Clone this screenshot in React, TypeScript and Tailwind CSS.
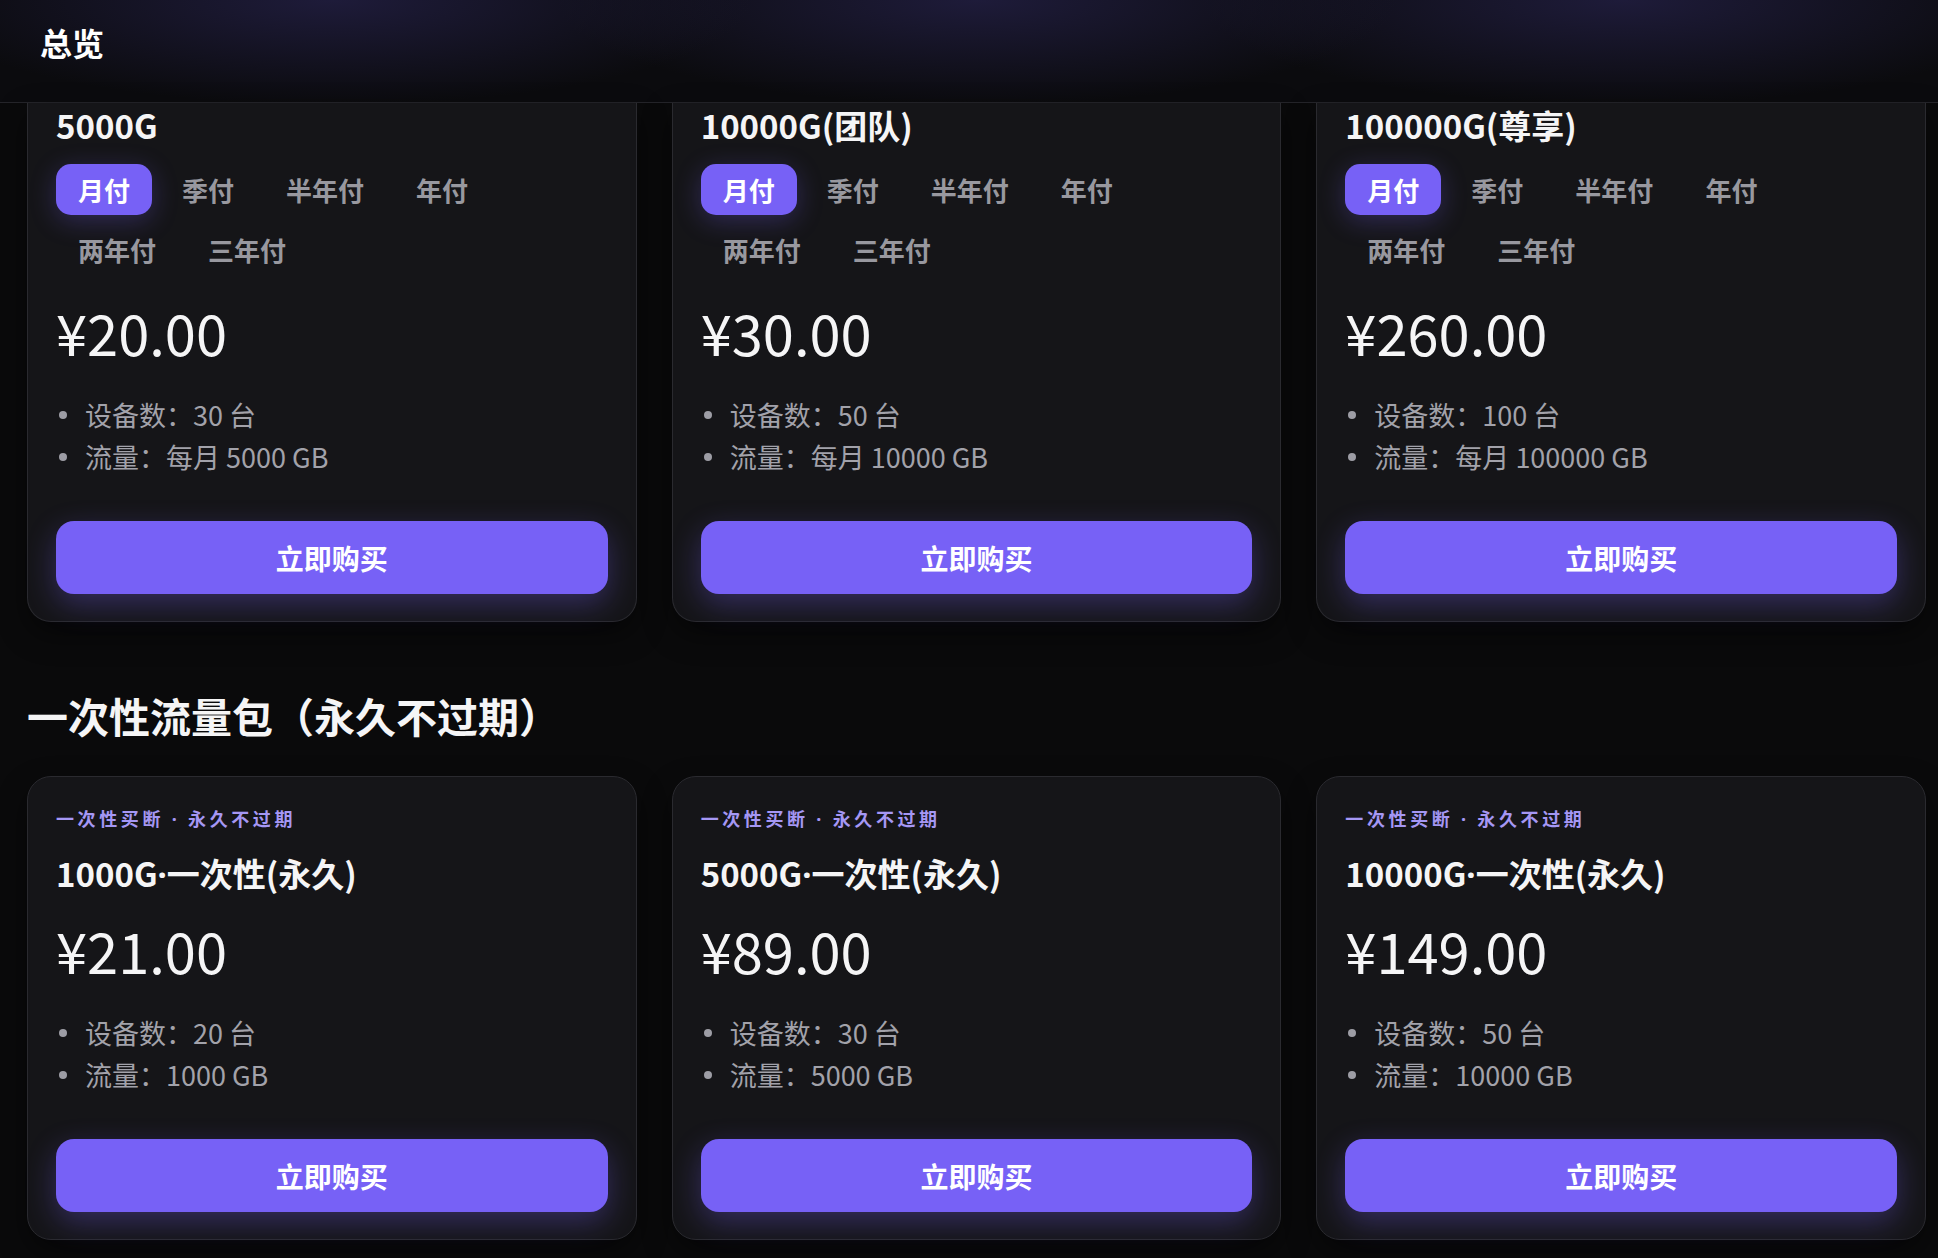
import React from 'react';

interface Plan {
  title: string;
  price: string;
  devices: string;
  traffic: string;
}

const monthly: Plan[] = [
  { title: '5000G', price: '¥20.00', devices: '30 台', traffic: '每月 5000 GB' },
  { title: '10000G(团队)', price: '¥30.00', devices: '50 台', traffic: '每月 10000 GB' },
  { title: '100000G(尊享)', price: '¥260.00', devices: '100 台', traffic: '每月 100000 GB' },
];

const oneTime: Plan[] = [
  { title: '1000G', price: '¥21.00', devices: '20 台', traffic: '1000 GB' },
  { title: '5000G', price: '¥89.00', devices: '30 台', traffic: '5000 GB' },
  { title: '10000G', price: '¥149.00', devices: '50 台', traffic: '10000 GB' },
];

const periods = ['月付', '季付', '半年付', '年付', '两年付', '三年付'];

// narrow latin middle dot (the CJK font draws it full width)
const Dot = () => <span className="font-['Noto_Sans',sans-serif] leading-[0]">·</span>;

const PlanBody: React.FC<{ plan: Plan }> = ({ plan }) => (
  <>
    <div className="mt-[23px] text-[56px] leading-[68px] font-normal text-[#f5f5f6]">{plan.price}</div>
    <ul className="mt-[28px] text-[27px] leading-[42px] text-[#a2a2aa]">
      <li className="flex items-center">
        <span className="ml-[3px] mr-[18px] h-2 w-2 rounded-full bg-[#9d9da5]" />
        <span>设备数：{plan.devices}</span>
      </li>
      <li className="flex items-center">
        <span className="ml-[3px] mr-[18px] h-2 w-2 rounded-full bg-[#9d9da5]" />
        <span>流量：{plan.traffic}</span>
      </li>
    </ul>
    <button className="mt-[43px] h-[73px] w-full rounded-[18px] bg-[#7761f6] text-[28px] font-bold text-white shadow-[0_10px_30px_rgba(119,97,246,0.32)]">
      立即购买
    </button>
  </>
);

const MonthlyCard: React.FC<{ plan: Plan }> = ({ plan }) => (
  <div className="rounded-b-[24px] border border-t-0 border-[#2a2a2f] bg-[#151518] px-[28px] pt-[2px] pb-[27px] shadow-[0_12px_30px_rgba(0,0,0,0.45)]">
    <h3 className="text-[33px] leading-[40px] font-bold text-[#f5f5f6]">{plan.title}</h3>
    <div className="mt-[19px] flex flex-wrap gap-x-2 gap-y-[9px]">
      {periods.map((p, i) => (
        <button
          key={p}
          className={
            i === 0
              ? 'h-[51px] rounded-[15px] bg-[#7761f6] px-[22px] text-[26px] font-bold text-white shadow-[0_6px_26px_rgba(119,97,246,0.28)]'
              : 'h-[51px] rounded-[15px] px-[22px] text-[26px] font-bold text-[#98989f]'
          }
        >
          {p}
        </button>
      ))}
    </div>
    <PlanBody plan={plan} />
  </div>
);

const OneTimeCard: React.FC<{ plan: Plan }> = ({ plan }) => (
  <div className="rounded-[24px] border border-[#2a2a2f] bg-[#151518] px-[28px] pt-[28px] pb-[27px] shadow-[0_12px_30px_rgba(0,0,0,0.45)]">
    <div className="text-[18px] leading-[27px] font-bold tracking-[0.2em] text-[#a597f4]">
      一次性买断 <Dot /> 永久不过期
    </div>
    <h3 className="mt-[21px] text-[33px] leading-[40px] font-bold text-[#f5f5f6]">
      {plan.title}
      <Dot />
      一次性(永久)
    </h3>
    <PlanBody plan={plan} />
  </div>
);

export default function App() {
  return (
    <div className="min-h-screen bg-[#0a0a0b] font-['Noto_Sans_CJK_SC','Noto_Sans',sans-serif]">
      <header className="h-[103px] border-b border-[#25252a] bg-[#0b0b0e] bg-[image:radial-gradient(420px_105px_at_332px_0px,rgba(31,28,60,0.95),transparent),radial-gradient(420px_105px_at_977px_0px,rgba(31,28,60,0.95),transparent),radial-gradient(420px_105px_at_1622px_0px,rgba(31,28,60,0.95),transparent)] px-10 pt-[22px]">
        <h1 className="text-[32px] leading-[40px] font-bold text-white">总览</h1>
      </header>
      <main className="pl-[27px] pr-[12px] pb-[17px]">
        <div className="grid grid-cols-3 gap-[35px]">
          {monthly.map((p) => (
            <MonthlyCard key={p.title} plan={p} />
          ))}
        </div>
        <h2 className="mt-[65px] mb-[33px] text-[41px] leading-[56px] font-bold text-[#f5f5f6]">一次性流量包（永久不过期）</h2>
        <div className="grid grid-cols-3 gap-[35px]">
          {oneTime.map((p) => (
            <OneTimeCard key={p.title} plan={p} />
          ))}
        </div>
      </main>
    </div>
  );
}
